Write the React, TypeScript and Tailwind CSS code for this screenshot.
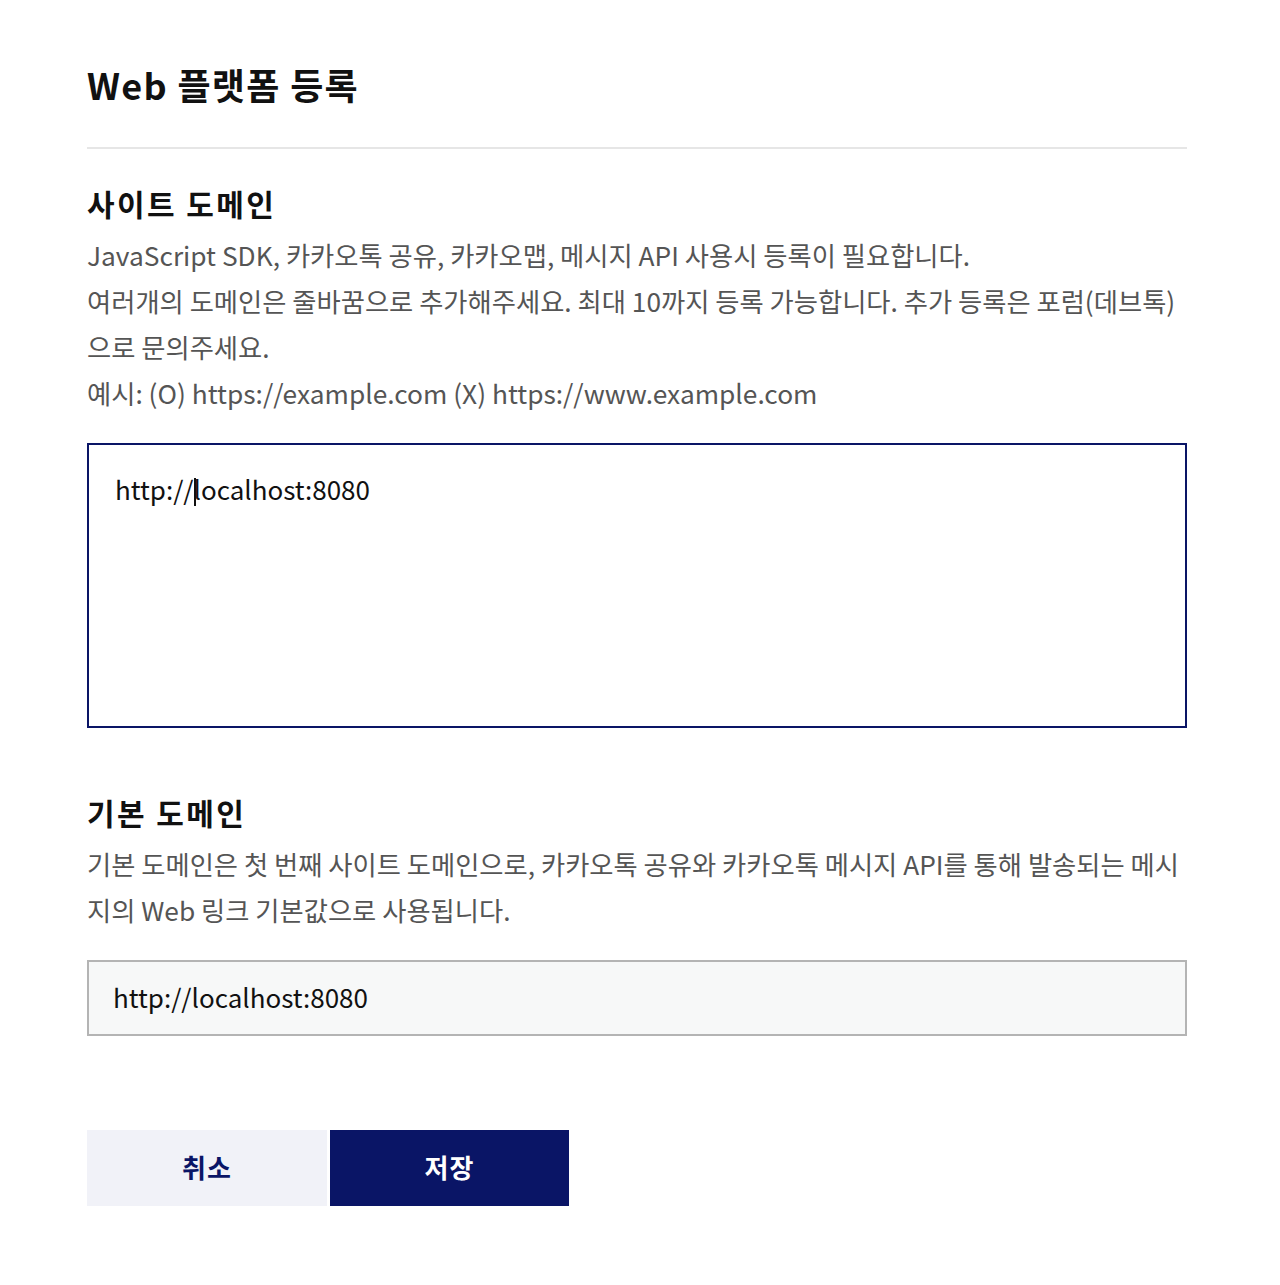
import React from 'react';

const App = () => {
  const siteDomainNotes = [
    'JavaScript SDK, 카카오톡 공유, 카카오맵, 메시지 API 사용시 등록이 필요합니다.',
    '여러개의 도메인은 줄바꿈으로 추가해주세요. 최대 10까지 등록 가능합니다. 추가 등록은 포럼(데브톡)으로 문의주세요.',
    '예시: (O) https://example.com (X) https://www.example.com',
  ];

  return (
    <div className="min-h-[1285px] bg-white font-['Noto_Sans_CJK_KR',sans-serif]">
      <div className="w-[1100px] ml-[87px] pt-[60px]">
        <h1 className="text-[36px] leading-[48px] font-bold tracking-[1.3px] text-[#111]">Web 플랫폼 등록</h1>
        <div className="mt-[39px] h-[2px] bg-[#e6e6e6]" />

        <section className="mt-[34px]">
          <h2 className="text-[30px] leading-[40px] font-bold tracking-[2.4px] text-[#111]">사이트 도메인</h2>
          <div className="mt-[9px] text-[26.3px] leading-[46px] text-[#555]">
            {siteDomainNotes.map((note) => (
              <p key={note}>{note}</p>
            ))}
          </div>
          <div className="mt-[27px] h-[285px] border-2 border-[#0a1566] px-[26px] pt-[26px] text-[26px] leading-[36px] text-[#111]">
            http://
            <span className="inline-block w-[2px] h-[28px] -mr-[2px] bg-[#111] align-[-6px]" />
            localhost:8080
          </div>
        </section>

        <section className="mt-[64px]">
          <h2 className="text-[30px] leading-[40px] font-bold tracking-[2.4px] text-[#111]">기본 도메인</h2>
          <p className="mt-[9px] text-[26.3px] leading-[46px] text-[#555]">
            기본 도메인은 첫 번째 사이트 도메인으로, 카카오톡 공유와 카카오톡 메시지 API를 통해 발송되는 메시지의 Web 링크 기본값으로 사용됩니다.
          </p>
          <div className="mt-[27px] h-[76px] flex items-center border-2 border-[#b4b4b4] bg-[#f7f8f8] px-[24px] pb-[3px] text-[26px] text-[#111]">
            http://localhost:8080
          </div>
        </section>

        <div className="mt-[94px] flex gap-[3px]">
          <button className="w-[240px] h-[76px] pb-[3px] bg-[#f1f2f8] text-[26px] font-bold tracking-[1px] text-[#0a1566]">취소</button>
          <button className="w-[239px] h-[76px] pb-[3px] bg-[#0a1566] text-[26px] font-bold tracking-[1px] text-white">저장</button>
        </div>
      </div>
    </div>
  );
};

export default App;
